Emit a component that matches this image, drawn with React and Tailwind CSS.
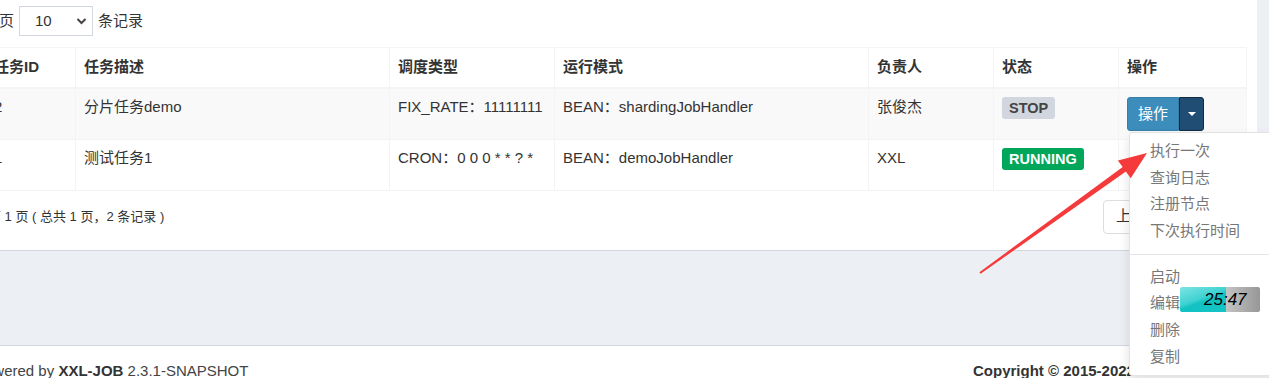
const cols = [90, 314, 165, 314, 125, 125, 128];

const headers = ["任务ID", "任务描述", "调度类型", "运行模式", "负责人", "状态", "操作"];

const jobs = [
  {
    id: 2,
    desc: "分片任务demo",
    type: "FIX_RATE：11111111",
    mode: "BEAN：shardingJobHandler",
    author: "张俊杰",
    status: "STOP",
  },
  {
    id: 1,
    desc: "测试任务1",
    type: "CRON：0 0 0 * * ? *",
    mode: "BEAN：demoJobHandler",
    author: "XXL",
    status: "RUNNING",
  },
];

const menuTop = ["执行一次", "查询日志", "注册节点", "下次执行时间"];
const menuBottom = ["启动", "编辑", "删除", "复制"];

function StatusLabel({ status }) {
  if (status === "RUNNING") {
    return (
      <span className="inline-block h-[22px] rounded-[3px] bg-[#00a65a] px-[7px] text-[14.5px] font-bold leading-[22px] text-white">
        RUNNING
      </span>
    );
  }
  return (
    <span className="inline-block h-[22px] rounded-[3px] bg-[#d2d6de] px-[7px] text-[14.5px] font-bold leading-[22px] text-[#444]">
      STOP
    </span>
  );
}

function OpButton() {
  return (
    <div className="inline-flex">
      <button className="h-[34px] rounded-l-[3px] border border-[#367fa9] bg-[#3c8dbc] px-[10px] text-[15px] leading-5 text-white">
        操作
      </button>
      <button className="flex h-[34px] w-[25px] items-center justify-center rounded-r-[3px] border border-[#122b40] bg-[#204d74]">
        <span className="h-0 w-0 border-x-[4px] border-t-[4px] border-x-transparent border-t-white" />
      </button>
    </div>
  );
}

export default function App() {
  return (
    <div
      className="relative h-[378px] w-[1269px] overflow-hidden bg-[#ecf0f5] text-[15px] text-[#333]"
      style={{ fontFamily: '"Liberation Sans", Arial, "Noto Sans CJK SC", sans-serif' }}
    >
      {/* box */}
      <div className="-ml-[25px] h-[251px] w-[1282px] border-b border-[#d2d6de] bg-white px-[10px] pt-[6px]">
        <div className="-ml-px flex h-[30px] items-center">
          <span>每页</span>
          <div className="ml-[5px] flex h-[30px] w-[74px] items-center border border-[#d2d6de] pl-[15px] pr-[5px]">
            <span>10</span>
            <svg className="ml-auto" width="11" height="10" viewBox="0 0 11 10">
              <path d="M1.5 3 L5.5 7 L9.5 3" fill="none" stroke="#444" strokeWidth="2" />
            </svg>
          </div>
          <span className="ml-[5px]">条记录</span>
        </div>

        <table className="mt-[11px] w-[1262px] table-fixed border-collapse border border-[#f4f4f4]">
          <colgroup>
            {cols.map((w, i) => (
              <col key={i} style={{ width: w }} />
            ))}
          </colgroup>
          <thead>
            <tr>
              {headers.map((h) => (
                <th
                  key={h}
                  className="h-[40px] border border-b-2 border-[#f4f4f4] px-2 py-2 text-left font-bold leading-5"
                >
                  {h}
                </th>
              ))}
            </tr>
          </thead>
          <tbody>
            {jobs.map((job, i) => (
              <tr key={job.id} className={i === 0 ? "bg-[#f9f9f9]" : "bg-white"}>
                <td className="border border-[#f4f4f4] px-2 py-2 align-top leading-5">{job.id}</td>
                <td className="border border-[#f4f4f4] px-2 py-2 align-top leading-5">{job.desc}</td>
                <td className="whitespace-nowrap border border-[#f4f4f4] px-2 py-2 align-top leading-5">{job.type}</td>
                <td className="border border-[#f4f4f4] px-2 py-2 align-top leading-5">{job.mode}</td>
                <td className="border border-[#f4f4f4] px-2 py-2 align-top leading-5">{job.author}</td>
                <td className="border border-[#f4f4f4] px-2 py-2 align-top leading-5">
                  <StatusLabel status={job.status} />
                </td>
                <td className="h-[51px] border border-[#f4f4f4] px-2 py-2 align-top leading-5">
                  {i === 0 && <OpButton />}
                </td>
              </tr>
            ))}
          </tbody>
        </table>

        <div className="mt-[9px] flex h-[34px] items-center">
          <div className="w-[1118px] pl-[3px] text-[13px]">第 1 页 ( 总共 1 页，2 条记录 )</div>
          <button className="h-[34px] rounded-l-[4px] border border-[#ddd] bg-white px-3 text-[#333]">
            上一页
          </button>
        </div>
      </div>

      {/* gray band */}
      <div className="h-[94px]" />

      {/* footer */}
      <footer className="flex h-[40px] border-t border-[#d2d6de] bg-white pt-[15px] leading-5 text-[#444]">
        <div className="-ml-[40px] w-[1013px] shrink-0 pl-[15px]">
          Powered by <b className="text-[#333]">XXL-JOB</b> 2.3.1-SNAPSHOT
        </div>
        <div className="shrink-0 whitespace-nowrap font-bold text-[#333]">Copyright © 2015-2022 XXL-JOB</div>
      </footer>

      {/* dropdown menu */}
      <div className="absolute left-[1129px] top-[132px] w-[170px] rounded-[3px] border border-[#e3e3e3] bg-white py-[5px] shadow-[0_6px_12px_rgba(0,0,0,0.12)]">
        {menuTop.map((m) => (
          <div key={m} className="h-[26.67px] px-5 leading-[26.67px] text-[#777]">
            {m}
          </div>
        ))}
        <div className="my-[9px] h-px bg-[#e5e5e5]" />
        {menuBottom.map((m) => (
          <div key={m} className="h-[26.67px] px-5 leading-[26.67px] text-[#777]">
            {m}
          </div>
        ))}
      </div>

      {/* recorder timer overlay */}
      <div className="absolute left-[1180px] top-[287px] flex h-[25px] w-[80px] overflow-hidden rounded-[2px]">
        <div className="h-full w-[46px] bg-[linear-gradient(160deg,#7fe3e3_0%,#3fd2d2_45%,#12c2c2_55%,#15c4c4_100%)]" />
        <div className="h-full w-[34px] bg-[linear-gradient(to_right,#c4c4c4,#979797)]" />
        <span
          className="absolute left-[24px] top-0 text-[17px] italic leading-[25px] text-black"
          style={{ fontFamily: '"Liberation Sans", Arial, sans-serif' }}
        >
          25:47
        </span>
      </div>

      {/* annotation arrow */}
      <svg className="pointer-events-none absolute left-0 top-0" width="1269" height="378">
        <polygon
          points="979.4,272.2 1122.7,167 1117.9,160.4 1147,153 1130.7,178.2 1125.9,171.6 980.6,273.8"
          fill="#f43a3a"
        />
      </svg>
    </div>
  );
}
